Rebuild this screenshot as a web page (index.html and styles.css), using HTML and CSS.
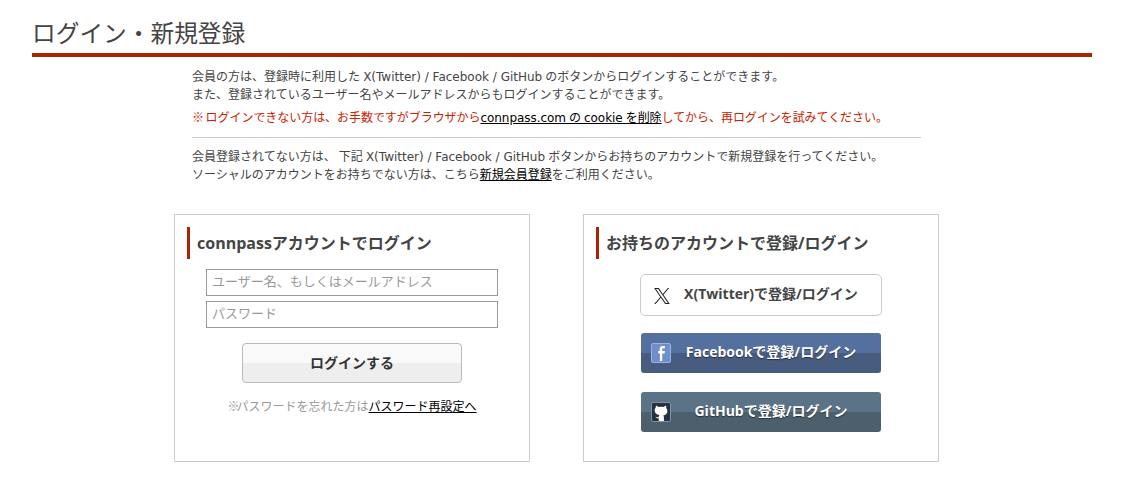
FILE: index.html
```html
<!DOCTYPE html>
<html lang="ja">
<head>
    <meta charset="UTF-8">
    <meta name="viewport" content="width=device-width, initial-scale=1.0">
    <title>ログイン・新規登録</title>
    <link rel="stylesheet" href="styles.css">
</head>
<body>

    <div class="container">
        <h1 class="page-title">ログイン・新規登録</h1>

        <div class="notice">
            <p>会員の方は、登録時に利用した <span class="latin">X(Twitter) / Facebook / GitHub</span> のボタンからログインすることができます。<br>また、登録されているユーザー名やメールアドレスからもログインすることができます。</p>
            <p class="warning"><span class="mark">※</span> ログインできない方は、お手数ですがブラウザから<a href="#"><span class="latin">connpass.com</span> の <span class="latin">cookie</span> を削除</a>してから、再ログインを試みてください。</p>
            <hr>
            <p>会員登録されてない方は、 下記 <span class="latin">X(Twitter) / Facebook / GitHub</span> ボタンからお持ちのアカウントで新規登録を行ってください。<br>ソーシャルのアカウントをお持ちでない方は、こちら<a href="#">新規会員登録</a>をご利用ください。</p>
        </div>

        <div class="cards">
            <div class="card">
                <h2 class="card-title">connpassアカウントでログイン</h2>
                <form class="login-form">
                    <input type="text" placeholder="ユーザー名、もしくはメールアドレス">
                    <input type="password" placeholder="パスワード">
                    <button type="button" class="login-btn">ログインする</button>
                </form>
                <p class="forgot"><span class="mark">※</span>パスワードを忘れた方は<a href="#">パスワード再設定へ</a></p>
            </div>

            <div class="card">
                <h2 class="card-title">お持ちのアカウントで登録/ログイン</h2>
                <div class="social">
                    <a class="social-btn twitter" href="#">
                        <svg class="icon-x" viewBox="0 0 24 24" width="16" height="16"><path fill="#222" d="M14.2 10.2 22.9 0h-2.1l-7.6 8.9L7.2 0H.2l9.2 13.4L.2 24h2.1l8-9.3 6.4 9.3h7zM11.3 13.5l-.9-1.3L3 1.6h3.2l6 8.5.9 1.3 7.7 11.1h-3.2z"/></svg>
                        X(Twitter)で登録/ログイン
                    </a>
                    <a class="social-btn facebook" href="#">
                        <svg class="icon" viewBox="0 0 20 20" width="20" height="20"><rect x="0.5" y="0.5" width="19" height="19" rx="1.5" fill="#6f8fcb" stroke="#9db3dc"/><path fill="#fff" d="M11.2 18v-7.4h2.400l.3-2.600h-2.700V6.500c0-.8.3-1.200 1.200-1.200h1.500V3h-2c-2.200 0-3.200 1.200-3.200 3.200V8H7.200v2.600h1.700V18z"/></svg>
                        Facebookで登録/ログイン
                    </a>
                    <a class="social-btn github" href="#">
                        <svg class="icon" viewBox="0 0 20 20" width="20" height="20"><rect x="0.5" y="0.5" width="19" height="19" rx="1.5" fill="#24323f" stroke="#7d93a6"/><path fill="#fff" d="M5 3.500 7.500 5.100a7.500 7.500 0 0 1 5 0L15 3.500l.4 3c.7.700 1 1.600 1 2.600 0 2.700-1.700 4.100-4.200 4.400.5.400.7 1 .7 1.700V19H7.800v-2.700c-1.500.3-2.600-.2-3.300-1.700.8.500 2.200 1.200 3.300.2v-.2c0-.8.200-1.300.600-1.700-2.500-.3-4.800-1.700-4.800-4.500 0-1 .4-1.900 1-2.600z"/></svg>
                        GitHubで登録/ログイン
                    </a>
                </div>
            </div>
        </div>
    </div>

</body>
</html>
```

FILE: styles.css
```css
body {
    font-family: "Open Sans", "Noto Sans CJK JP", sans-serif;
    background-color: #fff;
    color: #444;
    margin: 0;
}

.container {
    width: 1060px;
    margin-left: 32px;
    padding-top: 17px;
}

.page-title {
    font-size: 23.7px;
    font-weight: normal;
    line-height: 32px;
    margin: 0;
    padding-bottom: 4px;
    border-bottom: 4px solid #a92400;
}

.notice {
    width: 729px;
    margin: 11px 0 0 160px;
    font-size: 12px;
    line-height: 18px;
}

.notice p {
    margin: 0;
}

.notice a {
    color: #000;
    text-decoration: underline;
}

.notice .latin {
    font-family: "DejaVu Sans", sans-serif;
    font-size: 12px;
}

.mark {
    letter-spacing: -3px;
}

.notice .warning {
    color: #cc2200;
    margin-top: 5px;
    letter-spacing: -0.05px;
}

.warning .mark {
    letter-spacing: -1.5px;
}

.notice hr {
    border: 0;
    border-top: 1px solid #ccc;
    margin: 10px 0 10px;
}

.cards {
    display: flex;
    gap: 53px;
    margin: 30px 0 0 142px;
}

.card {
    width: 356px;
    height: 248px;
    box-sizing: border-box;
    border: 1px solid #ccc;
    padding-top: 12px;
}

.card-title {
    font-size: 16px;
    font-weight: bold;
    line-height: 32px;
    margin: 0 0 0 12px;
    padding-left: 7px;
    border-left: 3px solid #a92400;
}

.login-form {
    display: flex;
    flex-direction: column;
    align-items: center;
    margin-top: 10px;
}

.login-form input {
    width: 292px;
    height: 27px;
    box-sizing: border-box;
    border: 1px solid #999;
    padding: 0 5px 3px;
    margin-bottom: 5px;
    font-family: inherit;
    font-size: 13px;
    color: #444;
}

.login-form input::placeholder {
    color: #999;
}

.login-btn {
    width: 220px;
    height: 40px;
    margin-top: 10px;
    padding-bottom: 3px;
    border: 1px solid #bbb;
    border-radius: 4px;
    background: linear-gradient(#f9f9f9 50%, #eee 50%);
    font-family: inherit;
    font-size: 14px;
    font-weight: bold;
    color: #333;
}

.forgot {
    margin: 15px 0 0;
    font-size: 12px;
    line-height: 18px;
    text-align: center;
    color: #999;
}

.forgot a {
    color: #000;
    text-decoration: underline;
}

.social {
    display: flex;
    flex-direction: column;
    align-items: center;
    margin-top: 15px;
}

.social-btn {
    display: flex;
    align-items: center;
    justify-content: center;
    position: relative;
    width: 240px;
    height: 40px;
    box-sizing: border-box;
    border-radius: 3px;
    padding: 0 0 5px 20px;
    margin-bottom: 19px;
    font-size: 14px;
    font-weight: bold;
    color: #fff;
    text-decoration: none;
    text-shadow: 0 1px 1px rgba(0, 0, 0, 0.5);
}

.social-btn .icon {
    position: absolute;
    left: 10px;
    top: 10px;
}

.twitter {
    width: 242px;
    height: 42px;
    margin-bottom: 17px;
    border: 1px solid #ccc;
    border-radius: 5px;
    color: #444;
    text-shadow: none;
}

.twitter .icon-x {
    position: absolute;
    left: 13px;
    top: 13px;
}

.facebook {
    background: linear-gradient(#54709e 50%, #485c80 50%);
}

.github {
    background: linear-gradient(#5b7386 50%, #4b5f6d 50%);
}
```
